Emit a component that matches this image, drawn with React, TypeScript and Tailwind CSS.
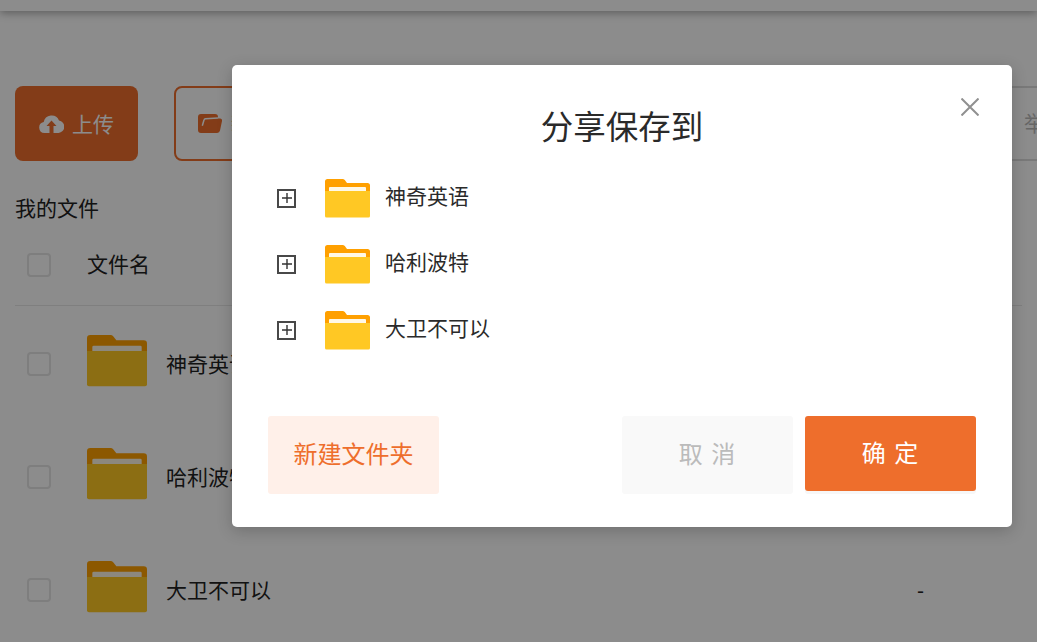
import React from 'react';

const FONT = "font-['Liberation_Sans','Noto_Sans_CJK_SC',sans-serif]";

const folders = ['神奇英语', '哈利波特', '大卫不可以'];

const FolderIcon = ({ className }: { className: string }) => (
  <svg viewBox="0 0 45 39" className={className}>
    <path d="M0 2.500A2.500 2.500 0 0 1 2.500 0h15a3 3 0 0 1 2.300 1.100L22 4h20.500A2.500 2.500 0 0 1 45 6.500V16H0z" fill="#ffa000" />
    <rect x="4" y="8" width="37" height="6" rx="1" fill="#fff8e6" />
    <path d="M0 12h45v25a1.500 1.500 0 0 1-1.500 1.500h-42A1.500 1.500 0 0 1 0 37z" fill="#ffc824" />
  </svg>
);

const UploadIcon = () => (
  <svg viewBox="0 0 25 19" className="h-[19px] w-[25px] shrink-0">
    <path d="M5.500 19a5.500 5.500 0 0 1-.8-10.900A8 8 0 0 1 20 6.500 6.300 6.300 0 0 1 19.500 19z" fill="#ffffff" />
    <path d="M12.500 6.500l5 5.500h-3v7h-4v-7h-3z" fill="#ee6e2c" />
  </svg>
);

const OpenFolderIcon = () => (
  <svg viewBox="0 0 24 19" className="h-[19px] w-[24px] shrink-0">
    <path d="M3 0h14a3 3 0 0 1 3 3v1.500h2a2 2 0 0 1 2 2.500l-2 9.500a3 3 0 0 1-3 2.500H3a3 3 0 0 1-3-3V3a3 3 0 0 1 3-3z" fill="#ee6e2c" />
    <path d="M4.300 11.800L6 6q.3-1.200 1.500-1.300L20 4" stroke="#ffffff" strokeWidth="1.500" fill="none" />
  </svg>
);

const PlusBox = () => (
  <div className="flex h-[19px] w-[19px] shrink-0 items-center justify-center border-2 border-[#484848]">
    <svg viewBox="0 0 10 10" className="h-[10px] w-[10px]">
      <path d="M5 0v10M0 5h10" stroke="#333333" strokeWidth="1.400" />
    </svg>
  </div>
);

const Checkbox = () => (
  <div className="h-6 w-6 shrink-0 rounded-[4px] border-2 border-[#e5e5e5] bg-white" />
);

const App = () => {
  return (
    <div className={`${FONT} relative h-[642px] w-[1037px] overflow-hidden bg-white text-[#222222]`}>
      {/* page behind the dialog */}
      <div className="h-[11px] bg-white shadow-[0_2px_8px_rgba(0,0,0,0.35)]" />
      <div className="flex gap-9 pl-[15px] pt-[75px]">
        <button className="flex h-[75px] w-[123px] shrink-0 items-center justify-center gap-2 rounded-lg bg-[#ee6e2c] text-[21px] text-white">
          <UploadIcon />
          <span className="pt-[2px]">上传</span>
        </button>
        <button className="flex h-[75px] w-[240px] shrink-0 items-center gap-[9px] rounded-lg border-2 border-[#ee6e2c] pl-[22px] text-[21px] text-[#ee6e2c]">
          <OpenFolderIcon />
          新建
        </button>
        <div className="ml-[350px] flex h-[75px] w-[400px] shrink-0 items-center rounded-lg border-2 border-[#dddddd] pl-[222px] text-[21px] text-[#bbbbbb]">
          举报
        </div>
      </div>
      <div className="pl-[15px] pt-[33px] text-[21px] leading-[30px]">我的文件</div>
      <div className="mx-[15px] flex h-[82px] items-center gap-9 border-b border-[#e8e8e8] pl-3 text-[21px]">
        <Checkbox />
        <span>文件名</span>
      </div>
      {folders.map((name, i) => (
        <div key={name} className="flex h-[113px] items-center pl-[27px] pr-[113px] text-[21px]">
          <div className="pt-[2px]">
            <Checkbox />
          </div>
          <FolderIcon className="mb-1 ml-9 h-[52px] w-[60px] shrink-0" />
          <span className="ml-[19px] mt-1">{name}</span>
          <span className="ml-auto mt-1">{i === 2 ? '-' : ''}</span>
        </div>
      ))}

      {/* overlay */}
      <div className="absolute inset-0 bg-black/45" />

      {/* dialog */}
      <div className="absolute left-[232px] top-[65px] flex h-[462px] w-[780px] flex-col rounded-[5px] bg-white px-9 shadow-[0_4px_16px_rgba(0,0,0,0.2)]">
        <svg viewBox="0 0 18 18" className="absolute right-[33px] top-[33px] h-[18px] w-[18px]">
          <path d="M0.500 0.500l17 17M17.500 0.500l-17 17" stroke="#909090" strokeWidth="2" />
        </svg>
        <h2 className="pt-[39px] text-center text-[32.500px] leading-[48px] text-[#2a2a2a]">分享保存到</h2>
        <ul className="mt-[13px] flex flex-col">
          {folders.map((name) => (
            <li key={name} className="flex h-[66px] items-center pl-[9px] text-[21px] text-[#2a2a2a]">
              <PlusBox />
              <FolderIcon className="ml-[29px] h-[39px] w-[45px] shrink-0" />
              <span className="mb-[2px] ml-[15px]">{name}</span>
            </li>
          ))}
        </ul>
        <div className="mt-[53px] flex gap-3">
          <button className="h-[78px] w-[171px] rounded-[3px] bg-[#fff0e9] text-2xl text-[#ee6e2c]">新建文件夹</button>
          <button className="ml-auto h-[78px] w-[171px] rounded-[3px] bg-[#f9f9f9] text-2xl tracking-[1px] text-[#bbbbbb]">取 消</button>
          <button className="h-[75px] w-[171px] rounded-[3px] bg-[#ee6e2c] text-2xl tracking-[1px] text-white shadow-[0_3px_0_#f7f7f7]">确 定</button>
        </div>
      </div>
    </div>
  );
};

export default App;
